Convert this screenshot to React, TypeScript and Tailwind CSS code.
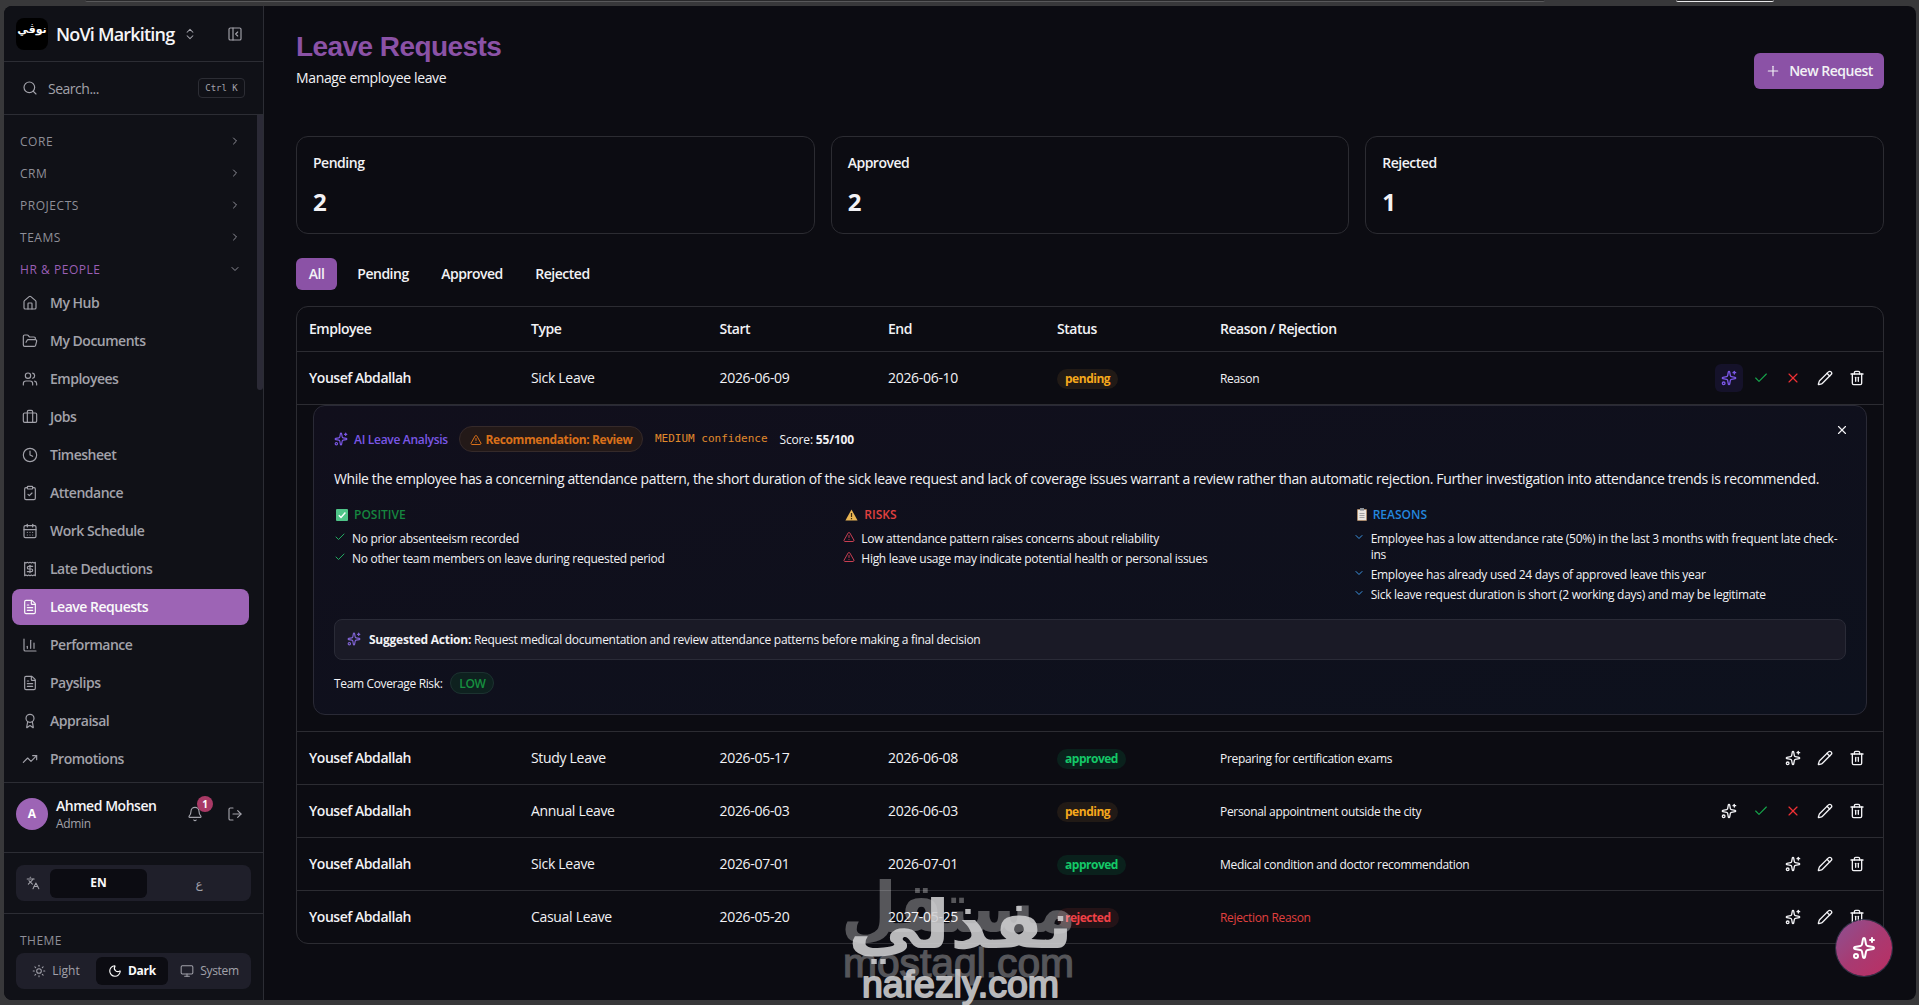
import React from 'react';
import {
  Award, Bell, Briefcase, CalendarDays, ChartColumn, Check, ChevronDown, ChevronRight, ChevronsUpDown,
  ClipboardCheck, Clock, FileText, FolderOpen, House, Languages, LogOut, Monitor, Moon, PanelLeftClose,
  Pencil, Plus, Receipt, Search, Sparkles, Sun, Trash2, TrendingUp, TriangleAlert, Users, X,
} from 'lucide-react';

const groups = ['CORE', 'CRM', 'PROJECTS', 'TEAMS'];

const items = [
  { label: 'My Hub', icon: House },
  { label: 'My Documents', icon: FolderOpen },
  { label: 'Employees', icon: Users },
  { label: 'Jobs', icon: Briefcase },
  { label: 'Timesheet', icon: Clock },
  { label: 'Attendance', icon: ClipboardCheck },
  { label: 'Work Schedule', icon: CalendarDays },
  { label: 'Late Deductions', icon: Receipt },
  { label: 'Leave Requests', icon: FileText, active: true },
  { label: 'Performance', icon: ChartColumn },
  { label: 'Payslips', icon: FileText },
  { label: 'Appraisal', icon: Award },
  { label: 'Promotions', icon: TrendingUp },
];

function Sidebar() {
  return (
    <aside className="flex w-[260px] shrink-0 flex-col border-r border-[#2c2d34] bg-[#101117] text-[#a2a2aa]">
      <div className="flex h-14 items-center border-b border-[#2c2d34] pr-5 pl-3">
        <div dir="rtl" className="flex size-8 items-center justify-center rounded-lg bg-black pb-1.5 font-['DejaVu_Sans'] text-[11px] font-bold text-white">نوڤي</div>
        <span className="ml-2 pt-0.5 text-[18px] font-semibold tracking-[-0.045em] text-[#f5f5f7]">NoVi Markiting</span>
        <ChevronsUpDown className="ml-[9px] size-3.5" strokeWidth={1.75} />
        <PanelLeftClose className="ml-auto size-4" strokeWidth={1.75} />
      </div>
      <div className="flex h-[53px] items-center border-b border-[#2c2d34] pr-[18px] pl-[18px]">
        <Search className="size-4" strokeWidth={1.75} />
        <span className="ml-2.5 text-[14px] tracking-[-0.035em]">Search...</span>
        <kbd className="ml-auto flex h-5 w-[47px] items-center justify-center rounded border border-[#2c2d34] pt-px font-['DejaVu_Sans_Mono'] text-[9px]">Ctrl K</kbd>
      </div>
      <nav className="relative flex h-[667px] flex-col overflow-hidden pt-2.5 pr-[14px] pl-2">
        {groups.map((g) => (
          <div key={g} className="flex h-8 shrink-0 items-center justify-between pr-2 pl-2 text-[12px] font-medium tracking-[0.045em] text-[#8f8f98]">
            <span className="pt-0.5">{g}</span><ChevronRight className="size-3" />
          </div>
        ))}
        <div className="flex h-8 shrink-0 items-center justify-between pr-2 pl-2 text-[12px] font-medium tracking-[0.045em] text-[#9a5fb5]">
          <span className="pt-0.5">HR &amp; PEOPLE</span><ChevronDown className="size-3 text-[#8f8f98]" />
        </div>
        <div className="flex flex-col gap-0.5">
          {items.map(({ label, icon: Icon, active }) => (
            <div key={label} className={`flex h-9 items-center gap-3 rounded-lg px-2.5 text-[14px] font-semibold tracking-[-0.035em] ${active ? 'bg-[#9d64b5] text-[#fafafa]' : ''}`}>
              <Icon className="size-4" strokeWidth={1.75} /><span className="pb-0.5">{label}</span>
            </div>
          ))}
        </div>
        <div className="absolute top-0 right-0 h-[275px] w-1.5 rounded-b bg-[#2b2a36]" />
      </nav>
      <div className="flex h-[70px] items-center border-t border-[#2c2d34] pr-5 pb-[7px] pl-3">
        <div className="flex size-8 items-center justify-center rounded-full bg-[#9d64b5] text-[12px] font-bold text-white">A</div>
        <div className="ml-2 flex flex-col pb-px">
          <span className="text-[14px] leading-[19px] font-semibold tracking-[-0.033em] text-[#f5f5f7]">Ahmed Mohsen</span>
          <span className="mt-px text-[12px] leading-4 tracking-[-0.03em]">Admin</span>
        </div>
        <div className="relative ml-auto">
          <Bell className="size-4" strokeWidth={1.75} />
          <span className="absolute -top-2.5 -right-2.5 flex size-4 items-center justify-center rounded-full bg-[#a93a66] text-[10px] font-bold text-white">1</span>
        </div>
        <LogOut className="ml-6 size-4" strokeWidth={1.75} />
      </div>
      <div className="flex h-[61px] items-center border-t border-[#2c2d34] px-3">
        <div className="flex h-9 w-[235px] items-center rounded-lg bg-[#1f1f2a] px-1">
          <div className="flex w-[30px] justify-center pr-1"><Languages className="size-3.5" strokeWidth={1.75} /></div>
          <div className="flex h-[29px] w-[97px] items-center justify-center rounded-md bg-[#0c0c12] text-[12px] font-bold text-[#fafafa]">EN</div>
          <div className="flex flex-1 items-center justify-center pt-0.5 pl-1 font-['DejaVu_Sans'] text-[12px]">ع</div>
        </div>
      </div>
      <div className="flex flex-1 flex-col border-t border-[#2c2d34] px-3 pt-[18px]">
        <div className="flex h-4 items-center px-1 pt-px text-[12px] font-medium tracking-[0.04em] text-[#8f8f98]">THEME</div>
        <div className="mt-[5px] flex h-9 w-[235px] shrink-0 items-center rounded-lg bg-[#1f1f2a] px-1 text-[12px] font-medium">
          <div className="flex w-[76px] items-center justify-center gap-1.5 pr-1"><Sun className="size-3.5" strokeWidth={1.75} />Light</div>
          <div className="flex h-7 w-[72px] items-center justify-center gap-1.5 rounded-md bg-[#0c0c12] font-bold tracking-[-0.02em] text-[#fafafa]"><Moon className="size-3.5" />Dark</div>
          <div className="flex flex-1 items-center justify-center gap-1.5 pl-1 tracking-[-0.03em]"><Monitor className="size-3.5" strokeWidth={1.75} />System</div>
        </div>
      </div>
    </aside>
  );
}

const cols = 'grid h-[52px] grid-cols-[222px_188.5px_168.5px_169px_163px_1fr_auto] items-center px-3 text-[14px] tracking-[-0.022em]';

const pill: Record<string, string> = {
  pending: 'bg-[#211a16] text-[#f5a81c]',
  approved: 'bg-[#0a211c] text-[#14c868]',
  rejected: 'bg-[#241317] text-[#f04046]',
};

type Leave = { type: string; start: string; end: string; status: string; reason: string; open?: boolean };

const leaves: Leave[] = [
  { type: 'Sick Leave', start: '2026-06-09', end: '2026-06-10', status: 'pending', reason: 'Reason', open: true },
  { type: 'Study Leave', start: '2026-05-17', end: '2026-06-08', status: 'approved', reason: 'Preparing for certification exams' },
  { type: 'Annual Leave', start: '2026-06-03', end: '2026-06-03', status: 'pending', reason: 'Personal appointment outside the city' },
  { type: 'Sick Leave', start: '2026-07-01', end: '2026-07-01', status: 'approved', reason: 'Medical condition and doctor recommendation' },
  { type: 'Casual Leave', start: '2026-05-20', end: '2027-05-25', status: 'rejected', reason: 'Rejection Reason' },
];

function Action({ children, className = '' }: { children: React.ReactNode; className?: string }) {
  return <button className={`flex size-7 items-center justify-center rounded-md ${className}`}>{children}</button>;
}

function Row({ l }: { l: Leave }) {
  const rejected = l.status === 'rejected';
  return (
    <div className={cols}>
      <span className="pb-0.5 font-semibold tracking-[-0.033em]">Yousef Abdallah</span>
      <span className="pb-0.5">{l.type}</span>
      <span className="pb-0.5">{l.start}</span>
      <span className="pb-0.5">{l.end}</span>
      <span><span className={`inline-flex h-5 items-center rounded-full px-2 text-[12px] font-bold tracking-[-0.04em] ${pill[l.status]}`}>{l.status}</span></span>
      <span className={`pt-0.5 text-[12px] tracking-[-0.027em] ${rejected ? 'text-[#e0403f]' : ''}`}>{l.reason}</span>
      <span className="flex gap-1">
        <Action className={l.open ? 'bg-[#15122a] text-[#7a57e6]' : ''}><Sparkles className="size-4" /></Action>
        {l.status === 'pending' && <Action className="text-[#16a34a]"><Check className="size-4" strokeWidth={1.75} /></Action>}
        {l.status === 'pending' && <Action className="text-[#ef3034]"><X className="size-4" strokeWidth={1.75} /></Action>}
        <Action><Pencil className="size-4" /></Action>
        <Action><Trash2 className="size-4" /></Action>
      </span>
    </div>
  );
}

function Findings({ emoji, title, color, icon, lines }: { emoji: React.ReactNode; title: string; color: string; icon: React.ReactNode; lines: string[] }) {
  return (
    <div>
      <div className={`flex h-4 items-center gap-1.5 pl-0.5 text-[12px] font-semibold tracking-[0em] ${color}`}>{emoji}{title}</div>
      <ul className="mt-2 flex flex-col gap-1">
        {lines.map((t) => (
          <li key={t} className="flex gap-1.5 text-[12px] leading-4 tracking-[-0.024em]"><span className="flex h-4 w-3 shrink-0 items-center pb-1">{icon}</span>{t}</li>
        ))}
      </ul>
    </div>
  );
}

const greenBox = (
  <svg viewBox="0 0 12 12" className="size-3"><rect width="12" height="12" rx="1" fill="#4fc488" /><path d="M2.8 6.2 5 8.5l4.4-5" stroke="#fff" strokeWidth="1.4" fill="none" /></svg>
);
const warnSign = (
  <svg viewBox="0 0 13 12" className="h-3 w-[13px]"><path d="M6.5.6 12.6 11.6H.4Z" fill="#e8b453" /><path d="M6.5 4v4M6.5 9v1.3" stroke="#3b2a10" strokeWidth="1.2" /></svg>
);
const clipboard = (
  <svg viewBox="0 0 10 13" className="ml-0.5 h-[13px] w-2.5"><rect y="1" width="10" height="12" rx="1" fill="#a98a6d" /><rect x="1" y="2" width="8" height="10" fill="#e9e6e2" /><rect x="3" width="4" height="2.6" fill="#8d9299" /><path d="M2.5 5.5h5M2.5 7.5h5M2.5 9.5h5" stroke="#8f9096" strokeWidth=".8" /></svg>
);

function Analysis() {
  return (
    <div className="mx-4 mb-4 h-[310px] rounded-xl border border-[#2a2a36] bg-linear-to-br from-[#110f1c] to-[#0d111d] p-5">
      <div className="flex h-[26px] items-center text-[12px]">
        <Sparkles className="size-3.5 text-[#7a57e6]" />
        <span className="ml-1.5 w-[93px] pt-0.5 font-semibold tracking-[-0.025em] whitespace-nowrap text-[#7a57e6]">AI Leave Analysis</span>
        <span className="ml-3 flex h-[26px] w-[184px] items-center justify-center gap-1 rounded-full border border-[#352a2a] bg-[#231918] pt-px font-bold tracking-[-0.033em] text-[#d9701a]"><TriangleAlert className="size-3" />Recommendation: Review</span>
        <span className="ml-3 pt-px font-['DejaVu_Sans_Mono'] text-[11px] text-[#e08a2c]">MEDIUM confidence</span>
        <span className="ml-3 pt-0.5 tracking-[-0.015em]">Score: <b className="font-bold">55/100</b></span>
        <X className="mr-[-3px] mb-[18px] ml-auto size-3.5" />
      </div>
      <p className="mt-4 text-[14px] leading-[22.75px] tracking-[-0.0268em] whitespace-nowrap">While the employee has a concerning attendance pattern, the short duration of the sick leave request and lack of coverage issues warrant a review rather than automatic rejection. Further investigation into attendance trends is recommended.</p>
      <div className="mt-4 grid grid-cols-3 gap-4">
        <Findings emoji={greenBox} title="POSITIVE" color="text-[#16853f]" icon={<Check className="size-3 text-[#22a860]" />} lines={['No prior absenteeism recorded', 'No other team members on leave during requested period']} />
        <Findings emoji={warnSign} title="RISKS" color="text-[#e0403f]" icon={<TriangleAlert className="size-3 text-[#c93f52]" />} lines={['Low attendance pattern raises concerns about reliability', 'High leave usage may indicate potential health or personal issues']} />
        <Findings emoji={clipboard} title="REASONS" color="text-[#2486de]" icon={<ChevronDown className="size-3 text-[#3b95e4]" />} lines={['Employee has a low attendance rate (50%) in the last 3 months with frequent late check-ins', 'Employee has already used 24 days of approved leave this year', 'Sick leave request duration is short (2 working days) and may be legitimate']} />
      </div>
      <div className="mt-4 flex h-[41px] items-center rounded-lg border border-[#2a2b37] bg-[#1a1a26] px-3 text-[12px] tracking-[-0.024em]">
        <Sparkles className="mr-2 size-3.5 text-[#8064d4]" />
        <span className="pt-0.5"><b className="font-bold tracking-[-0.02em]">Suggested Action:</b> Request medical documentation and review attendance patterns before making a final decision</span>
      </div>
      <div className="mt-3 flex items-center text-[12px] tracking-[-0.03em]">
        <span className="pt-0.5">Team Coverage Risk:</span>
        <span className="ml-2 flex h-[22px] w-11 items-center justify-center rounded-full border border-[#1c3230] bg-[#0e211f] pt-0.5 font-semibold text-[#16903f]">LOW</span>
      </div>
    </div>
  );
}

function Watermark() {
  return (
    <svg className="pointer-events-none absolute top-[844px] left-[830px] h-[161px] w-[260px] overflow-visible" viewBox="830 844 260 161">
      <g fill="#ffffff" opacity="0.3">
        <text x="1076" y="932" direction="rtl" fontFamily="DejaVu Sans" fontWeight="700" fontSize="70" textLength="235" lengthAdjust="spacingAndGlyphs">مستقل</text>
        <text x="843" y="976.5" fontFamily="Liberation Sans" fontSize="40" textLength="231" lengthAdjust="spacingAndGlyphs" stroke="#fff" strokeWidth="1.2">mostaql.com</text>
      </g>
      <g fill="#d0d0d2" opacity="0.88">
        <text x="1073" y="948" direction="rtl" fontFamily="DejaVu Sans" fontWeight="700" fontSize="67" textLength="225" lengthAdjust="spacingAndGlyphs">نفذلي</text>
        <text x="862" y="997" fontFamily="Liberation Sans" fontSize="36" textLength="197" lengthAdjust="spacingAndGlyphs" stroke="#d0d0d2" strokeWidth="1.8" strokeLinejoin="round">nafezly.com</text>
      </g>
    </svg>
  );
}

export default function App() {
  return (
    <div className="relative h-[1005px] w-[1919px] overflow-hidden bg-[#38383a] pt-1.5 pr-[3px] pb-[5px] pl-1 font-['Open_Sans','Noto_Sans',sans-serif] text-[#f2f2f5]">
      <div className="absolute top-0 left-[85px] h-0.5 w-[1460px] rounded-b-md border-b border-[#58585a] bg-[#29292b]" />
      <div className="absolute top-0 left-[1676px] h-0.5 w-[98px] rounded-b-lg border-b border-[#e8e8ea] bg-[#29292b]" />
      <div className="flex h-[994px] overflow-hidden rounded-lg bg-[#0c0c12]">
        <Sidebar />
        <main className="flex flex-1 flex-col px-8">
          <header className="flex h-[130px] items-start justify-between">
            <div className="pt-6">
              <h1 className="font-['Liberation_Sans'] text-[28px] leading-[34px] font-bold tracking-[-0.02em] text-[#8b52a6]">Leave Requests</h1>
              <p className="mt-1 text-[14px] leading-5 tracking-[-0.025em]">Manage employee leave</p>
            </div>
            <button className="mt-[47px] flex h-9 w-[130px] items-center justify-center gap-2 rounded-md bg-[#8b52a6] text-[14px] font-semibold tracking-[-0.035em]"><Plus className="size-4" strokeWidth={1.75} /><span className="pb-0.5">New Request</span></button>
          </header>
          <div className="grid grid-cols-3 gap-4">
            {[['Pending', '2'], ['Approved', '2'], ['Rejected', '1']].map(([k, v]) => (
              <div key={k} className="flex h-[98px] flex-col rounded-xl border border-[#2c2c32] px-4 pt-4">
                <span className="text-[14px] leading-5 font-semibold tracking-[-0.035em]">{k}</span>
                <span className="mt-[13px] text-[24px] leading-8 font-bold">{v}</span>
              </div>
            ))}
          </div>
          <div className="mt-6 flex gap-2 text-[14px] font-semibold tracking-[-0.035em]">
            <span className="flex h-8 w-[41px] items-center justify-center rounded-md bg-[#8b52a6] pb-0.5">All</span>
            <span className="flex h-8 w-[76px] items-center justify-center pb-0.5">Pending</span>
            <span className="flex h-8 w-[86px] items-center justify-center pb-0.5">Approved</span>
            <span className="flex h-8 w-[79px] items-center justify-center pb-0.5">Rejected</span>
          </div>
          <div className="mt-4 flex flex-col divide-y divide-[#2c2c32] overflow-hidden rounded-xl border border-[#2c2c32]">
            <div className="grid h-[45px] grid-cols-[222px_188.5px_168.5px_169px_163px_1fr] items-center px-3 pb-0.5 text-[14px] font-semibold tracking-[-0.033em]">
              {['Employee', 'Type', 'Start', 'End', 'Status', 'Reason / Rejection'].map((h) => <span key={h}>{h}</span>)}
            </div>
            {leaves.map((l, i) => (
              <React.Fragment key={i}>
                <div className="shrink-0"><Row l={l} /></div>
                {l.open && <div><Analysis /></div>}
              </React.Fragment>
            ))}
          </div>
        </main>
      </div>
      <button className="absolute right-[27px] bottom-[29px] flex size-14 items-center justify-center rounded-full bg-linear-to-br from-[#8b4f93] via-[#a83a72] to-[#bb2d62] text-white ring-1 ring-[#33334a]"><Sparkles className="size-6" /></button>
      <Watermark />
    </div>
  );
}
